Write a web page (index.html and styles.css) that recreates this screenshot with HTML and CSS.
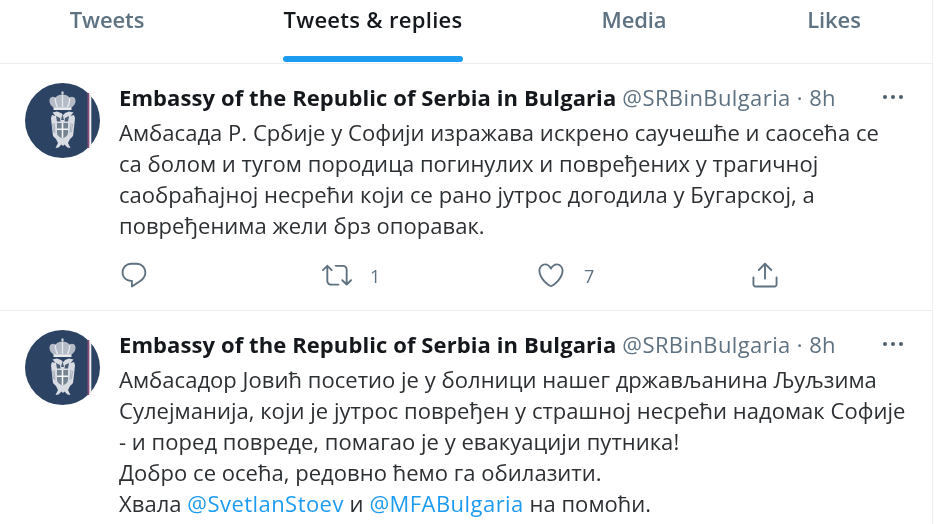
FILE: index.html
```html
<!DOCTYPE html>
<html lang="sr">
<head>
<meta charset="utf-8">
<title>Embassy of the Republic of Serbia in Bulgaria</title>
<link rel="stylesheet" href="styles.css">
</head>
<body>
<svg class="defs" width="0" height="0" aria-hidden="true">
  <symbol id="crest" viewBox="0 0 75 75">
    <circle cx="37.5" cy="37.5" r="37.5" fill="#2d4363"/>
    <rect x="62.500" y="10" width="1.800" height="55" fill="#8d4a78"/>
    <rect x="64.300" y="10" width="2" height="55" fill="#f2eef2"/>
    <path d="M36.500 8.500h2v3h-2z" fill="#dfe3e8"/>
    <path d="M29 25c-3-2-5-5-4.500-8 .5-3 3.500-4 6-2.500 1.500-2 4-3 7-3s5.500 1 7 3c2.500-1.500 5.500-.5 6 2.500.5 3-1.500 6-4.500 8z" fill="#b4bbc6"/>
    <path d="M30.500 15c-.5 3 .5 6 2 9M37.500 12v12M44.500 15c.5 3-.5 6-2 9" stroke="#e6e9ed" stroke-width="1.300" fill="none"/>
    <path d="M28.500 24.500h18v2.500h-18z" fill="#e8eaee"/>
    <path d="M36 30l-4-1.500-4.500 1 3 3.500-3.500-1-1 3 1 10 1 8 3 3 2 4-2.500 5 3-.5 3-3 1.500 1.500 1.500-1.500 3 3 3 .5-2.500-5 2-4 3-3 1-8 1-10-1-3-3.500 1 3-3.500-4.500-1-4 1.500-1.500 2z" fill="#d9dde3"/>
    <path d="M32 40h11v10c0 2.500-2.500 4.500-5.500 5.500-3-1-5.500-3-5.500-5.500z" fill="#75828f"/>
    <path d="M36.700 40h1.600v15h-1.600zM32 45.500h11v1.600H32z" fill="#f4f5f7"/>
    <path d="M31 33l4 2 .5 3.500h-3.500zM44 33l-4 2-.5 3.500h3.500zM37.500 31l1.500 6h-3z" fill="#4c5d76"/>
    <path d="M29 40l1 10M46 40l-1 10M27.500 41l1 8M47.500 41l-1 8" stroke="#97a2b1" stroke-width=".8" fill="none"/>
  </symbol>
  <symbol id="i-reply" viewBox="0 0 24 24"><path d="M14.046 2.242l-4.148-.01h-.002c-4.374 0-7.8 3.427-7.8 7.802 0 4.098 3.186 7.206 7.465 7.37v3.828c0 .108.044.286.12.403.142.225.384.347.632.347.138 0 .277-.038.402-.118.264-.168 6.473-4.14 8.088-5.506 1.902-1.61 3.04-3.97 3.043-6.312v-.017c-.006-4.367-3.43-7.787-7.8-7.788zm3.787 12.972c-1.134.96-4.862 3.405-6.772 4.643V16.67c0-.414-.335-.75-.75-.75h-.396c-3.66 0-6.318-2.476-6.318-5.886 0-3.534 2.768-6.302 6.3-6.302l4.147.01h.002c3.532 0 6.3 2.766 6.302 6.296-.003 1.91-.942 3.844-2.514 5.176z"/></symbol>
  <symbol id="i-retweet" viewBox="0 0 24 24"><path d="M23.77 15.67c-.292-.293-.767-.293-1.06 0l-2.22 2.22V7.65c0-2.068-1.683-3.75-3.75-3.75h-5.85c-.414 0-.75.336-.75.75s.336.75.75.75h5.85c1.24 0 2.25 1.01 2.25 2.25v10.24l-2.22-2.22c-.293-.293-.768-.293-1.06 0s-.294.768 0 1.06l3.5 3.5c.145.147.337.22.53.22s.383-.072.53-.22l3.5-3.5c.294-.292.294-.767 0-1.06zm-10.66 3.28H7.26c-1.24 0-2.25-1.01-2.25-2.25V6.46l2.22 2.22c.148.147.34.22.532.22s.384-.073.53-.22c.293-.293.293-.768 0-1.06l-3.5-3.5c-.293-.294-.768-.294-1.06 0l-3.5 3.5c-.294.292-.294.767 0 1.06s.767.293 1.06 0l2.22-2.22V16.7c0 2.068 1.683 3.75 3.75 3.75h5.85c.414 0 .75-.336.75-.75s-.337-.75-.75-.75z"/></symbol>
  <symbol id="i-like" viewBox="0 0 24 24"><path d="M12 21.638h-.014C9.403 21.59 1.95 14.856 1.95 8.478c0-3.064 2.525-5.754 5.403-5.754 2.29 0 3.83 1.58 4.646 2.73.814-1.148 2.354-2.73 4.645-2.73 2.88 0 5.404 2.69 5.404 5.755 0 6.376-7.454 13.11-10.037 13.157H12zM7.354 4.225c-2.08 0-3.903 1.988-3.903 4.255 0 5.74 7.034 11.596 8.55 11.658 1.518-.062 8.55-5.917 8.55-11.658 0-2.267-1.823-4.255-3.903-4.255-2.528 0-3.94 2.936-3.952 2.965-.23.562-1.156.562-1.387 0-.014-.03-1.425-2.965-3.954-2.965z"/></symbol>
  <symbol id="i-share" viewBox="0 0 24 24"><path d="M17.53 7.47l-5-5c-.293-.293-.768-.293-1.06 0l-5 5c-.294.293-.294.768 0 1.06s.767.294 1.06 0l3.72-3.72V15c0 .414.336.75.75.75s.75-.336.75-.75V4.81l3.72 3.72c.146.147.338.22.53.22s.384-.072.53-.22c.293-.293.293-.767 0-1.06z"/><path d="M19.708 21.944H4.292C3.028 21.944 2 20.916 2 19.652V14c0-.414.336-.75.75-.75s.75.336.75.75v5.652c0 .437.355.792.792.792h15.416c.437 0 .792-.355.792-.792V14c0-.414.336-.75.75-.75s.75.336.75.75v5.652c0 1.264-1.028 2.292-2.292 2.292z"/></symbol>
</svg>
<main class="column">
  <nav class="tabs">
    <a class="tab">Tweets</a>
    <a class="tab tab-active"><span class="tab-label">Tweets &amp; replies<i class="tab-bar"></i></span></a>
    <a class="tab">Media</a>
    <a class="tab">Likes</a>
  </nav>

  <article class="tweet tweet-first">
    <svg class="avatar"><use href="#crest"/></svg>
    <div class="tweet-body">
      <header class="tweet-head">
        <strong class="name">Embassy of the Republic of Serbia in Bulgaria</strong>
        <span class="meta">@SRBinBulgaria · 8h</span>
        <span class="more"><i></i><i></i><i></i></span>
      </header>
      <p class="text">Амбасада Р. Србије у Софији изражава искрено саучешће и саосећа се<br>са болом и тугом породица погинулих и повређених у трагичној<br>саобраћајној несрећи који се рано јутрос догодила у Бугарској, а<br>повређенима жели брз опоравак.</p>
      <div class="actions">
        <span class="action action-reply"><svg class="icon"><use href="#i-reply"/></svg></span>
        <span class="action action-retweet"><svg class="icon"><use href="#i-retweet"/></svg><span class="count">1</span></span>
        <span class="action action-like"><svg class="icon"><use href="#i-like"/></svg><span class="count">7</span></span>
        <span class="action action-share"><svg class="icon"><use href="#i-share"/></svg></span>
      </div>
    </div>
  </article>

  <article class="tweet">
    <svg class="avatar"><use href="#crest"/></svg>
    <div class="tweet-body">
      <header class="tweet-head">
        <strong class="name">Embassy of the Republic of Serbia in Bulgaria</strong>
        <span class="meta">@SRBinBulgaria · 8h</span>
        <span class="more"><i></i><i></i><i></i></span>
      </header>
      <p class="text">Амбасадор Јовић посетио је у болници нашег држављанина Љуљзима<br>Сулејманија, који је јутрос повређен у страшној несрећи надомак Софије<br>- и поред повреде, помагао је у евакуацији путника!<br>Добро се осећа, редовно ћемо га обилазити.<br>Хвала <a class="mention">@SvetlanStoev</a> и <a class="mention">@MFABulgaria</a> на помоћи.</p>
    </div>
  </article>
</main>
</body>
</html>
```

FILE: styles.css
```css
* { box-sizing: border-box; }
html, body { margin: 0; height: 100%; overflow: hidden; background: #fff; }
body { font-family: "Open Sans", "Noto Sans", sans-serif; color: #26292c; }
.defs { position: absolute; }
.column { width: 933px; height: 524px; border-right: 1px solid #eff1f3; overflow: hidden; filter: blur(0.35px); }

.tabs { display: grid; grid-template-columns: 214px 318px 204px 196px; height: 64px; border-bottom: 1px solid #ebeef0; }
.tab { display: flex; justify-content: center; padding-top: 4px; font-size: 22px; line-height: 30px; font-weight: 600; letter-spacing: -0.1px; color: #5f7282; }
.tab-active { color: #14181c; letter-spacing: 0.3px; }
.tab-label { display: flex; flex-direction: column; height: 58px; }
.tab-bar { display: block; height: 6px; margin-top: auto; border-radius: 3px; background: #1d9bf0; }

.tweet { display: flex; align-items: flex-start; padding: 19px 0 0 25px; }
.tweet-first { height: 247px; border-bottom: 1px solid #ebeef0; }
.avatar { flex: none; width: 75px; height: 75px; }
.tweet-body { flex: 1; margin-left: 19px; }
.tweet-head { display: flex; align-items: center; height: 28px; font-size: 22px; line-height: 28px; white-space: nowrap; }
.name { font-weight: 700; letter-spacing: 0.09px; color: #14181c; }
.meta { margin-left: 6px; letter-spacing: 0.4px; color: #5f7282; }
.more { display: flex; gap: 4px; margin-left: auto; margin-right: 29px; }
.more i { width: 4px; height: 4px; border-radius: 50%; background: #4e5e6c; }

.text { margin: 5.500px 0 0; font-size: 22px; line-height: 31.100px; letter-spacing: 0.03px; white-space: nowrap; color: #2d3033; }
.mention { letter-spacing: 0.45px; color: #1d9bf0; }

.actions { display: flex; align-items: center; margin-top: 19.500px; color: #5f7282; }
.action { display: flex; align-items: center; }
.action-reply { width: 203px; }
.action-retweet { width: 214px; }
.action-like { width: 214px; }
.icon { width: 30px; height: 30px; fill: currentColor; }
.count { margin-left: 18px; padding-top: 2px; font-size: 18px; line-height: 24px; }
```
